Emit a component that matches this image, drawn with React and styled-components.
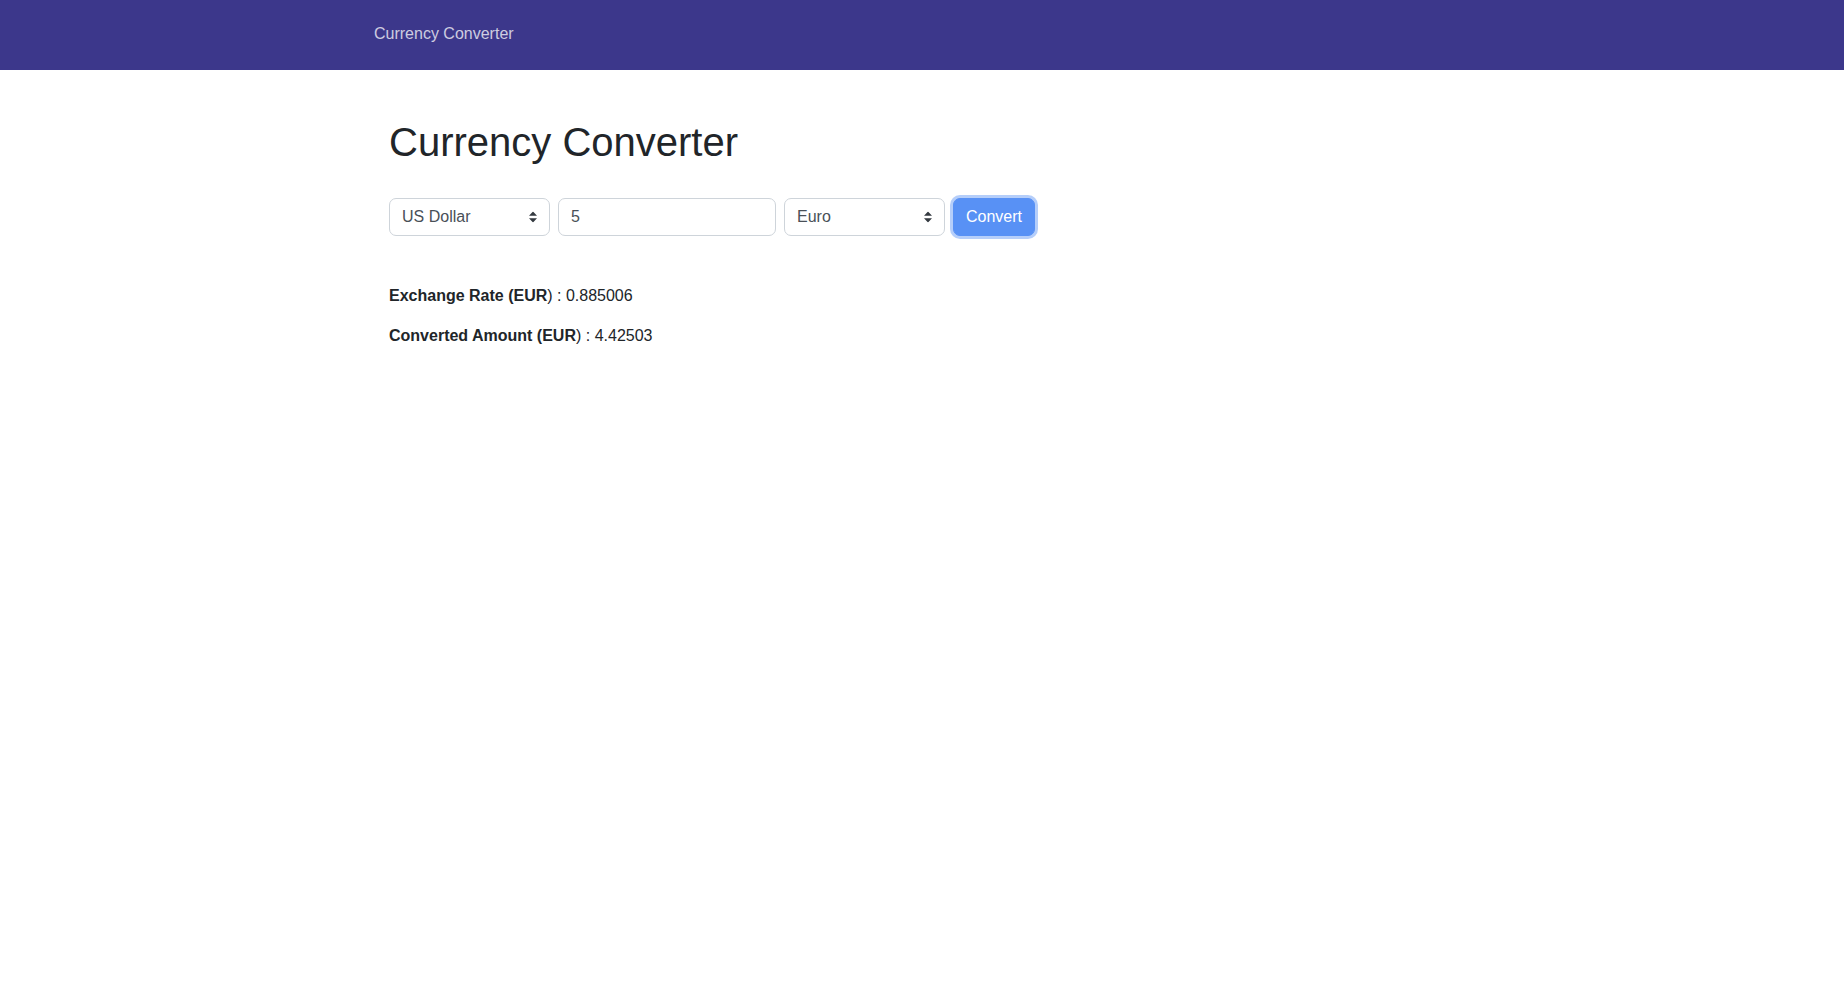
import React from "react";
import styled, { createGlobalStyle } from "styled-components";

const Global = createGlobalStyle`
  html, body { margin: 0; padding: 0; background: #fff; }
  body {
    font-family: "Liberation Sans", Arial, sans-serif;
    font-size: 16px;
    line-height: 1.5;
    color: #212529;
  }
  * { box-sizing: border-box; }
`;

const NavBar = styled.header`
  height: 70px;
  padding-bottom: 2px;
  background: #3c378b;
  display: flex;
  align-items: center;
`;

const NavInner = styled.div`
  width: 100%;
  max-width: 1096px;
  margin: 0 auto;
`;

const Brand = styled.a`
  font-size: 16px;
  line-height: 24px;
  color: rgba(255, 255, 255, 0.75);
  text-decoration: none;
`;

const Main = styled.main`
  max-width: 1066px;
  margin: 0 auto;
  padding-top: 48px;
`;

const Title = styled.h1`
  margin: 0 0 32px;
  font-size: 40px;
  line-height: 48px;
  font-weight: 400;
  color: #212529;
`;

const FormRow = styled.form`
  display: flex;
  gap: 8px;
  align-items: center;
`;

const SelectWrap = styled.div`
  position: relative;
  width: 161px;
`;

const Select = styled.select`
  appearance: none;
  -webkit-appearance: none;
  width: 100%;
  height: 38px;
  padding: 6px 36px 6px 12px;
  line-height: 24px;
  font-family: inherit;
  font-size: 16px;
  color: #495057;
  background: #fff;
  border: 1px solid #ced4da;
  border-radius: 7px;
  outline: none;
`;

const Caret = styled.svg`
  position: absolute;
  right: 13px;
  top: 50%;
  transform: translateY(-50%);
  pointer-events: none;
`;

const Amount = styled.input`
  width: 218px;
  height: 38px;
  padding: 6px 12px;
  line-height: 24px;
  font-family: inherit;
  font-size: 16px;
  color: #495057;
  border: 1px solid #ced4da;
  border-radius: 7px;
  outline: none;
`;

const Button = styled.button`
  height: 38px;
  padding: 6px 12px;
  line-height: 24px;
  font-family: inherit;
  font-size: 16px;
  color: #fff;
  background: #5891f5;
  border: 1px solid #5891f5;
  border-radius: 7px;
  box-shadow: 0 0 0 3px rgba(120, 165, 245, 0.55);
  cursor: pointer;
`;

const Results = styled.section`
  margin-top: 48px;
`;

const Line = styled.p`
  margin: 0 0 16px;
  line-height: 24px;
`;

function CurrencySelect({ value, options }) {
  return (
    <SelectWrap>
      <Select defaultValue={value}>
        {options.map((o) => (
          <option key={o}>{o}</option>
        ))}
      </Select>
      <Caret width="8" height="11" viewBox="0 0 8 11">
        <path d="M4 0 L8 4.3 L0 4.3 Z M4 11 L8 6.7 L0 6.7 Z" fill="#343a40" />
      </Caret>
    </SelectWrap>
  );
}

const currencies = ["US Dollar", "Euro", "British Pound", "Japanese Yen"];

export default function App() {
  return (
    <>
      <Global />
      <NavBar>
        <NavInner>
          <Brand href="#">Currency Converter</Brand>
        </NavInner>
      </NavBar>
      <Main>
        <Title>Currency Converter</Title>
        <FormRow onSubmit={(e) => e.preventDefault()}>
          <CurrencySelect value="US Dollar" options={currencies} />
          <Amount type="text" defaultValue="5" />
          <CurrencySelect value="Euro" options={currencies} />
          <Button type="submit">Convert</Button>
        </FormRow>
        <Results>
          <Line>
            <b>Exchange Rate (EUR</b>) : 0.885006
          </Line>
          <Line>
            <b>Converted Amount (EUR</b>) : 4.42503
          </Line>
        </Results>
      </Main>
    </>
  );
}
